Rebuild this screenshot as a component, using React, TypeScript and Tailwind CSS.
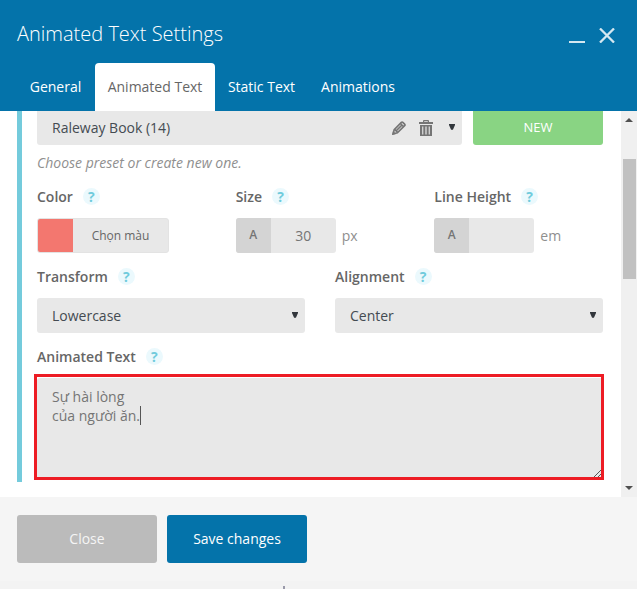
import React from 'react';

const tabs = ['General', 'Animated Text', 'Static Text', 'Animations'];
const tabWidths = ['w-[79px]', 'w-[120px]', 'w-[93px]', 'w-[100px]'];

const Label: React.FC<{ children: React.ReactNode }> = ({ children }) => (
  <div className="mt-2 mb-[5px] flex h-8 items-center gap-[10px] pb-px text-[14px] font-semibold text-[#666]">
    <span className="pb-px">{children}</span>
    <span className="flex h-[17px] w-[17px] items-center justify-center rounded-full bg-[#ebf9fd] text-[14px] leading-[17px] font-bold text-[#70cbdc]">
      ?
    </span>
  </div>
);

// Small triangle used by every dropdown
const Caret: React.FC = () => (
  <svg width="6" height="6" viewBox="0 0 6 6" fill="#32373c">
    <path d="M0 0h6v1L4 5.5 3 6 2 5.5 0 1z" />
  </svg>
);

const Select: React.FC<{ value: string }> = ({ value }) => (
  <div className="flex h-[35px] items-center justify-between rounded-[3px] bg-[#e8e8e8] pr-[7px] pl-[15px] text-[14px] text-[#444b52]">
    <span>{value}</span>
    <span className="pb-[2px]"><Caret /></span>
  </div>
);

const NumberField: React.FC<{ value: string; unit: string }> = ({ value, unit }) => (
  <div className="flex h-[35px] items-center text-[14px] text-[#8f8f8f]">
    <div className="flex h-full w-[100px] overflow-hidden rounded-[3px] bg-[#e8e8e8]">
      <span className="flex w-[35px] items-center justify-center bg-[#d4d4d4] pb-[2px] text-[12px] font-semibold text-[#757575]">
        A
      </span>
      <span className="flex flex-1 items-center justify-center text-[#757575]">{value}</span>
    </div>
    <span className="ml-[6px]">{unit}</span>
  </div>
);

const PencilIcon: React.FC = () => (
  <svg width="14" height="14" viewBox="0 0 14 14" fill="none" stroke="#757575" strokeWidth="1.7">
    <path d="M1.2 12.8l1-4.2L9.4 1.4q.7-.7 1.4 0l1.8 1.8q.7.7 0 1.4L5.4 11.8z" />
    <path d="M2.6 8.4l3 3M4.1 9.9l6.3-6.3M8.2 2.3l3.5 3.5" strokeWidth="1.5" />
    <path d="M0 14l1-4 3 3z" fill="#757575" stroke="none" />
  </svg>
);

const TrashIcon: React.FC = () => (
  <svg width="14" height="16" viewBox="0 0 14 16" fill="#757575">
    <path d="M4 2V1q0-1 1-1h4q1 0 1 1v1h4v2H0V2zM5.2 2h3.6V1.2H5.2z" fillRule="evenodd" />
    <path d="M1 5h12v11H1zM3.2 6.5v8h1.1v-8zm3.2 0v8h1.2v-8zm3.3 0v8h1.1v-8z" fillRule="evenodd" />
  </svg>
);

const App: React.FC = () => {
  return (
    <div className="flex h-[589px] w-[637px] flex-col overflow-hidden bg-[#f5f5f5] font-['Open_Sans',sans-serif]">
      {/* Header with tabs */}
      <header className="flex h-[111px] flex-col justify-between bg-[#0473aa] text-white">
        <div className="flex justify-between pt-[20px] pr-[22px] pl-[17px]">
          <h1 className="text-[20px] leading-[28px] font-light">Animated Text Settings</h1>
          <div className="flex gap-[14px] pt-[8px]">
            <svg width="16" height="15" viewBox="0 0 16 15" stroke="#d5e8f1" strokeWidth="2">
              <path d="M0 14h16" />
            </svg>
            <svg width="16" height="15" viewBox="0 0 16 15" fill="none" stroke="#d5e8f1" strokeWidth="2.3">
              <path d="M1 0.5l14 14M15 0.5l-14 14" />
            </svg>
          </div>
        </div>
        <nav className="flex pl-[16px]">
          {tabs.map((tab, i) => (
            <div
              key={tab}
              className={`${tabWidths[i]} flex h-12 items-center justify-center rounded-t-[4px] pb-[2px] text-[14px] whitespace-nowrap ${
                i === 1 ? 'bg-white text-[#666]' : 'font-medium'
              }`}
            >
              {tab}
            </div>
          ))}
        </nav>
      </header>

      {/* Scrollable settings */}
      <main className="flex h-[386px] bg-white">
        <div className="ml-[17px] h-[371px] w-[586px] border-l-[5px] border-[#74cbdc] pl-[15px]">
          <div className="flex h-[34px] gap-[11px]">
            <div className="flex w-[425px] items-center rounded-b-[3px] bg-[#e8e8e8] pr-[7px] pl-[15px] text-[14px] text-[#444b52]">
              <span className="flex-1 pb-[2px]">Raleway Book (14)</span>
              <PencilIcon />
              <span className="mr-[16px] ml-[13px]"><TrashIcon /></span>
              <span className="pb-[3px]"><Caret /></span>
            </div>
            <div className="flex w-[130px] items-center justify-center rounded-b-[3px] bg-[#89d483] text-[13px] text-white">
              NEW
            </div>
          </div>
          <p className="h-7 pt-2 text-[14px] leading-5 text-[#8f8f8f] italic">Choose preset or create new one.</p>

          <div className="grid grid-cols-3 gap-[30px]">
            <div>
              <Label>Color</Label>
              <div className="flex h-[35px] w-[132px] rounded-[3px] border border-[#e3e3e3] bg-[#e8e8e8]">
                <span className="w-[35px] rounded-l-[2px] bg-[#f3776f]" />
                <span className="flex flex-1 items-center justify-center text-[12px] text-[#666]">Chọn màu</span>
              </div>
            </div>
            <div>
              <Label>Size</Label>
              <NumberField value="30" unit="px" />
            </div>
            <div>
              <Label>Line Height</Label>
              <NumberField value="" unit="em" />
            </div>
          </div>

          <div className="grid grid-cols-2 gap-[30px]">
            <div>
              <Label>Transform</Label>
              <Select value="Lowercase" />
            </div>
            <div>
              <Label>Alignment</Label>
              <Select value="Center" />
            </div>
          </div>

          <Label>Animated Text</Label>
          <div className="-mt-1 -mr-px -ml-[3px] flex h-[106px] justify-between border-[3px] border-[#ed1c24] pt-px">
            <div className="flex flex-1 items-end justify-between rounded-tl-[3px] bg-[#e8e8e8] pl-[15px]">
              <div className="self-start pt-[9px] text-[14px] leading-[19px] text-[#757575]">
                <p>Sự hài lòng</p>
                <p className="flex">
                  của người ăn.
                  <span className="h-[19px] w-px bg-[#555]" />
                </p>
              </div>
              <svg width="8" height="8" viewBox="0 0 8 8" stroke="#555" fill="none">
                <path d="M1 8l7-7M5 8l3-3" />
              </svg>
            </div>
          </div>
        </div>

        <div className="ml-[18px] flex w-4 flex-col items-center bg-[#f0f0f0] pt-[7px] pb-[7px]">
          <svg width="8" height="4" viewBox="0 0 8 4" fill="#505050"><path d="M4 0l4 4H0z" /></svg>
          <div className="mt-[37px] h-[120px] w-[13px] bg-[#c1c1c1]" />
          <svg className="mt-auto" width="8" height="4" viewBox="0 0 8 4" fill="#505050"><path d="M0 0h8L4 4z" /></svg>
        </div>
      </main>

      {/* Footer buttons */}
      <footer className="flex h-[92px] flex-col justify-between pt-[18px]">
        <div className="flex gap-[10px] pl-[17px] text-[14px] font-medium text-white">
          <button className="h-12 w-[140px] rounded-[3px] bg-[#bbb] pb-[2px] text-[#f5f5f5]">Close</button>
          <button className="h-12 w-[140px] rounded-[3px] bg-[#0473aa] pb-[2px]">Save changes</button>
        </div>
        <div className="flex h-2 items-end bg-[#f3f3f3] pl-[283px]">
          <span className="h-[3px] w-[2px] bg-[#9a9aaa]" />
        </div>
      </footer>
    </div>
  );
};

export default App;
